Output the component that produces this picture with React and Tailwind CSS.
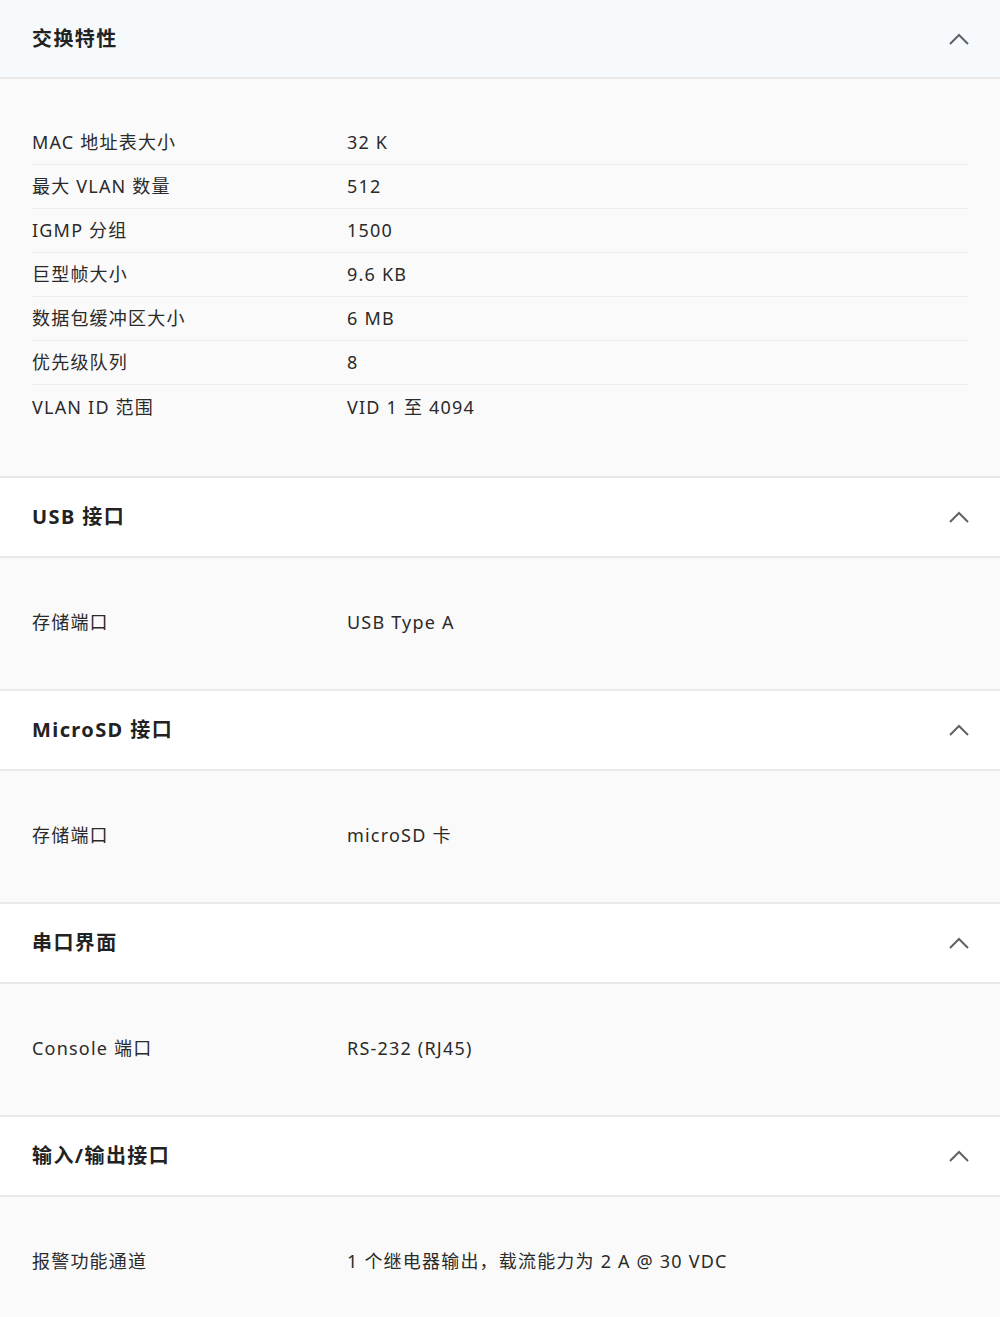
import React from 'react';

const sections = [
  {
    title: '交换特性',
    rows: [
      ['MAC 地址表大小', '32 K'],
      ['最大 VLAN 数量', '512'],
      ['IGMP 分组', '1500'],
      ['巨型帧大小', '9.6 KB'],
      ['数据包缓冲区大小', '6 MB'],
      ['优先级队列', '8'],
      ['VLAN ID 范围', 'VID 1 至 4094'],
    ],
  },
  { title: 'USB 接口', rows: [['存储端口', 'USB Type A']] },
  { title: 'MicroSD 接口', rows: [['存储端口', 'microSD 卡']] },
  { title: '串口界面', rows: [['Console 端口', 'RS-232 (RJ45)']] },
  { title: '输入/输出接口', rows: [['报警功能通道', '1 个继电器输出，载流能力为 2 A @ 30 VDC']] },
];

const ChevronUp = () => (
  <svg width="22" height="14" viewBox="0 0 22 14" fill="none">
    <polyline points="2,12 11,3 20,12" stroke="#5f6368" strokeWidth="2" />
  </svg>
);

const Section = ({ title, rows, first }) => (
  <section className={first ? '' : 'border-t-2 border-[#e9e9e9]'}>
    {/* Header */}
    <div
      className={`flex items-center justify-between px-8 border-b-2 border-[#e9e9e9] ${
        first ? 'h-[79px] bg-[#f6fafc]' : 'h-[80px] bg-white'
      }`}
    >
      <h2 className="text-[20px] font-bold tracking-[1.4px] text-[#222]">{title}</h2>
      <div className="mr-[-2px]">
        <ChevronUp />
      </div>
    </div>

    {/* Spec rows */}
    <div className={`bg-[#fafafa] px-8 pt-[42px] ${first ? 'pb-[47px]' : 'pb-[45px]'}`}>
      {rows.map(([label, value], i) => (
        <div
          key={label}
          className={`flex items-center h-11 text-[18px] tracking-[1.2px] text-[#2a2a2a] ${
            i < rows.length - 1 ? 'border-b border-[#ececec]' : ''
          }`}
        >
          <div className="w-[315px] shrink-0">{label}</div>
          <div>{value}</div>
        </div>
      ))}
    </div>
  </section>
);

export default function App() {
  return (
    <div
      className="w-[1000px] min-h-[1317px] bg-[#fafafa]"
      style={{ fontFamily: '"Noto Sans", "Noto Sans CJK SC", sans-serif' }}
    >
      {sections.map((s, i) => (
        <Section key={s.title} title={s.title} rows={s.rows} first={i === 0} />
      ))}
    </div>
  );
}
